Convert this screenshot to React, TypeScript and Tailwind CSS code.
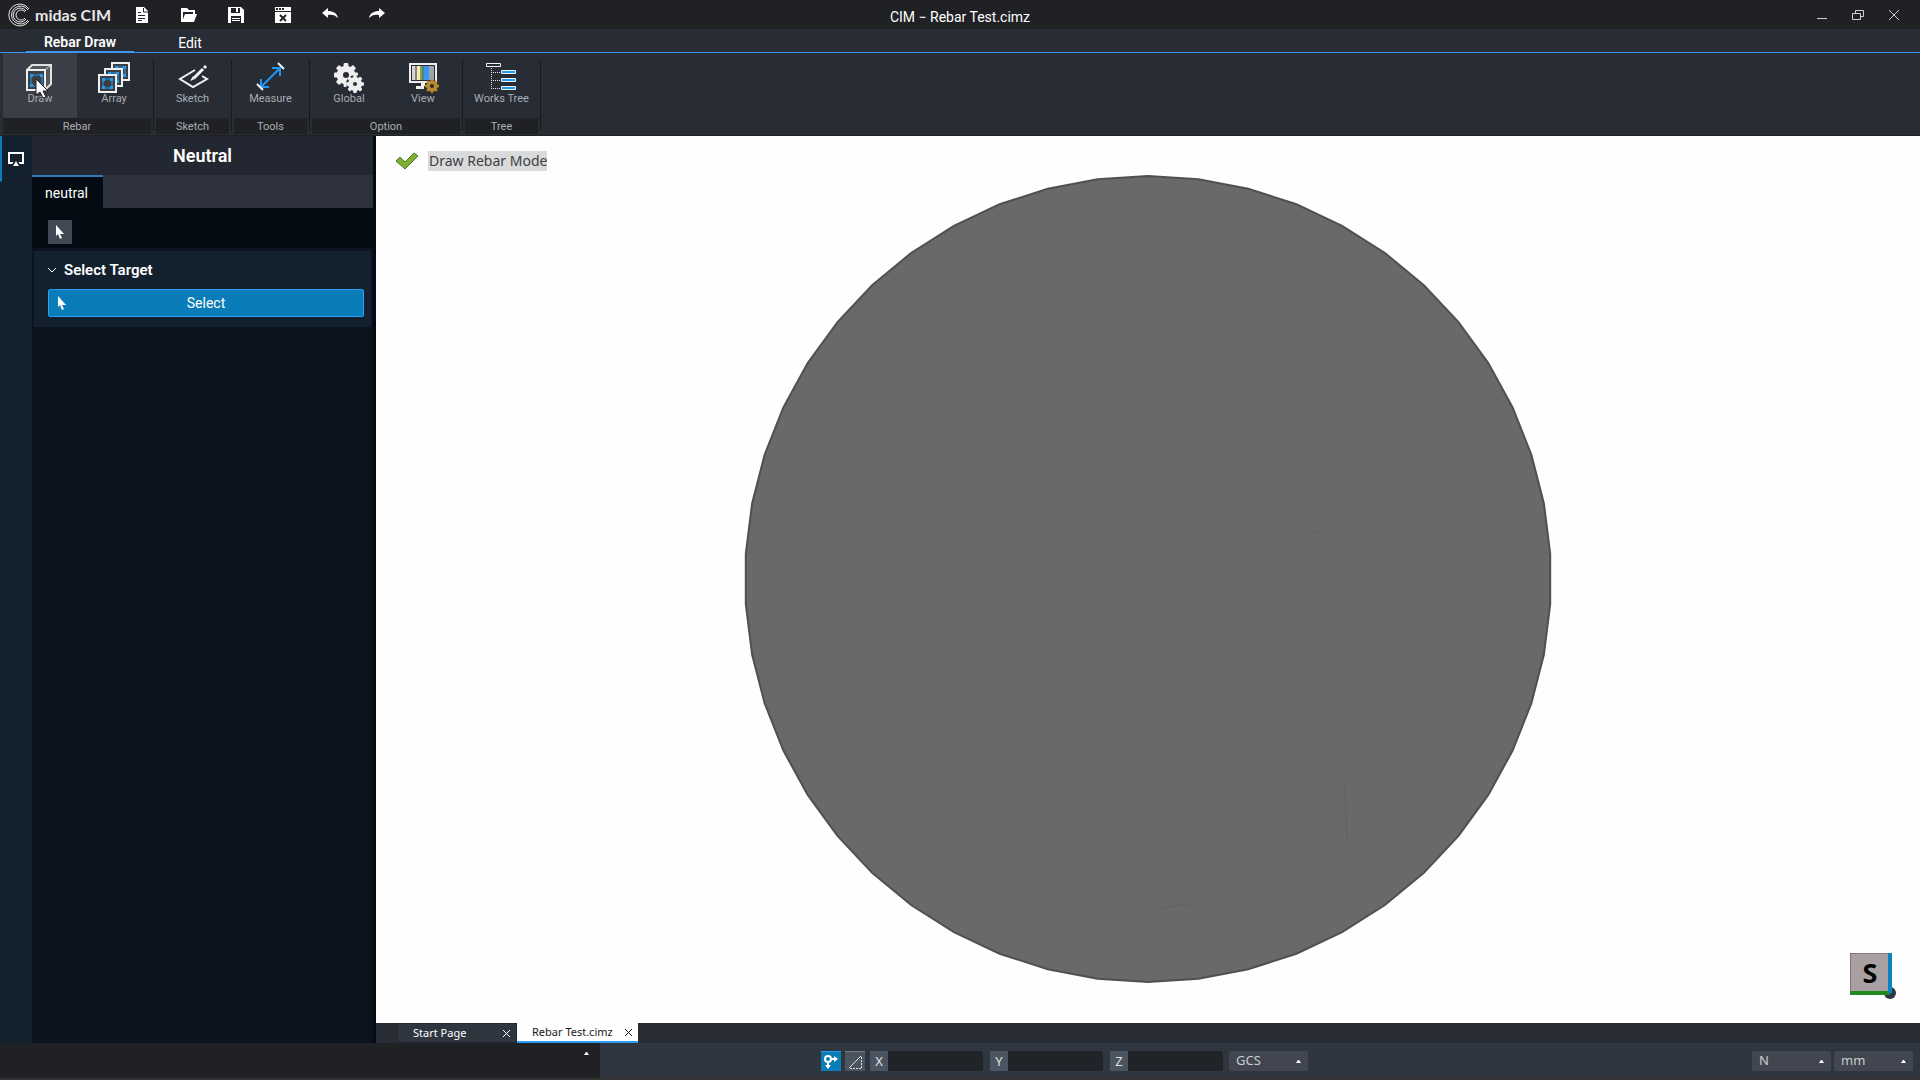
import type { ReactNode } from 'react'

const ribbonGroups = [
  { title: 'Rebar', items: [{ label: 'Draw', icon: <DrawIcon />, active: true }, { label: 'Array', icon: <ArrayIcon /> }] },
  { title: 'Sketch', items: [{ label: 'Sketch', icon: <SketchIcon /> }] },
  { title: 'Tools', items: [{ label: 'Measure', icon: <MeasureIcon /> }] },
  { title: 'Option', items: [{ label: 'Global', icon: <GlobalIcon /> }, { label: 'View', icon: <ViewIcon /> }] },
  { title: 'Tree', items: [{ label: 'Works Tree', icon: <TreeIcon /> }] },
] as { title: string; items: { label: string; icon: ReactNode; active?: boolean }[] }[]

const quickActions = [
  {
    label: 'New',
    icon: (
      <>
        <path d="M2 0h8l4 4v12H2z" fill="#fff" />
        <path d="M9.500 1v4H14M4 5.500h3M4 8.500h7M4 11.500h7M4 13.500h4" stroke="#222326" fill="none" />
      </>
    ),
  },
  {
    label: 'Open',
    icon: (
      <>
        <path d="M0 1h6l2 2h6v4h-2V5H2v10H0z" fill="#fff" />
        <path d="M4 7h12l-3 8H1z" fill="#fff" />
      </>
    ),
  },
  {
    label: 'Save',
    icon: (
      <>
        <path d="M0 0h13l3 3v13H0z" fill="#fff" />
        <path d="M3 1h9v5H3zM3 9h10v7H3z" fill="#222326" />
        <path d="M8 1h2v4H8zM4 11h8v1H4zM4 13h8v1H4z" fill="#fff" />
      </>
    ),
  },
  {
    label: 'Close file',
    icon: (
      <>
        <path d="M0 0h16v16H0z" fill="#fff" />
        <path d="M1 1h2v2H1zM4 1h2v2H4zM7 1h2v2H7zM0 4h16v1H0z" fill="#222326" />
        <path d="M5 8l6 6M11 8l-6 6" stroke="#222326" strokeWidth="2" />
      </>
    ),
  },
  {
    label: 'Undo',
    icon: <path d="M0 6l6-5v3c5 0 9 2 10 7-3-3-6-4-10-3v3z" fill="#fff" />,
  },
  {
    label: 'Redo',
    icon: <path d="M16 6l-6-5v3C5 4 1 6 0 11c3-3 6-4 10-3v3z" fill="#fff" />,
  },
]

function Square({ x, y }: { x: number; y: number }) {
  return (
    <g>
      <rect x={x + 1} y={y + 1} width="17" height="17" fill="#3b3e43" stroke="#efefef" strokeWidth="2" />
      <rect x={x + 5} y={y + 5} width="9" height="9" fill="none" stroke="#1f9cf0" />
      <path
        d={`M${x + 4} ${y + 4}h3v3h-3zM${x + 12} ${y + 4}h3v3h-3zM${x + 4} ${y + 12}h3v3h-3zM${x + 12} ${y + 12}h3v3h-3z`}
        fill="#1f9cf0"
      />
    </g>
  )
}

function DrawIcon() {
  return (
    <svg width="32" height="32" viewBox="1 0 32 32">
      <path d="M4 8l5-5h19v19l-6 6" fill="#55585c" stroke="#dfe3e0" strokeWidth="2" />
      <path d="M22 8l6-5" stroke="#dfe3e0" strokeWidth="1" />
      <rect x="4" y="8" width="18" height="20" fill="#3b3e43" stroke="#efefef" strokeWidth="2" />
      <rect x="8" y="13" width="11" height="11" fill="none" stroke="#1f9cf0" strokeWidth="1" />
      <path d="M7 12h3v3H7zM17 12h3v3h-3zM7 22h3v3H7zM17 22h3v3h-3z" fill="#1f9cf0" />
    </svg>
  )
}

function ArrayIcon() {
  return (
    <svg width="34" height="32" viewBox="0 0 34 32">
      <Square x={14} y={0} />
      <Square x={7} y={6} />
      <Square x={1} y={12} />
    </svg>
  )
}

function SketchIcon() {
  return (
    <svg width="32" height="32" viewBox="0 0 32 32" fill="none" stroke="#f2f2f2" strokeWidth="2">
      <path d="M18 8L3 17l13 8 14-8-5-3" />
      <path d="M17 16L26 7" strokeWidth="3" />
      <path d="M13 19l3-5 2 3z" fill="#f2f2f2" stroke="none" />
      <path d="M27 6l2-2" strokeWidth="3" />
    </svg>
  )
}

function MeasureIcon() {
  return (
    <svg width="32" height="32" viewBox="0 0 32 32" fill="none" strokeWidth="2">
      <path d="M6 25L25 6" stroke="#2196f3" />
      <path d="M17 6h8v8M6 17v8h8" stroke="#2196f3" />
      <path d="M23 1l6 6M2 22l6 6" stroke="#f2f2f2" />
    </svg>
  )
}

function Gear({ cx, cy, r, hole, fill }: { cx: number; cy: number; r: number; hole: number; fill: string }) {
  return (
    <g fill={fill}>
      {[0, 45, 90, 135].map((angle) => (
        <rect
          key={angle}
          x={cx - r / 5}
          y={cy - r}
          width={r / 2.5}
          height={r * 2}
          rx="1"
          transform={`rotate(${angle} ${cx} ${cy})`}
        />
      ))}
      <circle cx={cx} cy={cy} r={r * 0.78} />
      <circle cx={cx} cy={cy} r={hole} fill="#282c34" />
    </g>
  )
}

function GlobalIcon() {
  return (
    <svg width="32" height="32" viewBox="0 0 32 32">
      <Gear cx={13} cy={13} r={12} hole={3} fill="#efefef" />
      <circle cx="22" cy="22" r="9" fill="#282c34" />
      <Gear cx={22} cy={22} r={9} hole={2} fill="#efefef" />
    </svg>
  )
}

function ViewIcon() {
  return (
    <svg width="32" height="32" viewBox="0 0 32 32">
      <rect x="3" y="2" width="26" height="18" fill="#282c34" stroke="#efefef" strokeWidth="2" />
      <path d="M5 4h3v14H5z" fill="#d4d4d4" />
      <path d="M8 4h2v14H8z" fill="#8d7f83" />
      <path d="M10 4h3v14h-3z" fill="#f5eeb0" />
      <path d="M13 4h2v14h-2z" fill="#80a83c" />
      <path d="M15 4h2v14h-2z" fill="#5a7d8c" />
      <path d="M17 4h5v14h-5z" fill="#3b97f0" />
      <path d="M22 4h5v14h-5z" fill="#9ea4ac" />
      <path d="M14 21h4v3h-1v3H9v-3h5z" fill="#efefef" />
      <Gear cx={25} cy={24} r={7} hole={2} fill="#b98a2f" />
    </svg>
  )
}

function TreeIcon() {
  return (
    <svg width="32" height="32" viewBox="1 0 32 32" fill="none">
      <path d="M6.500 6v21M8 10.500h8M8 18.500h8M8 26.500h8" stroke="#e8e8e8" strokeDasharray="1 1" />
      <path d="M1.500 1.500h14v3h-14z" stroke="#f2f2f2" />
      <path d="M16.500 8.500h14v3h-14zM16.500 16.500h14v3h-14zM16.500 24.500h14v3h-14z" fill="#1f9cf0" stroke="#f2f2f2" />
    </svg>
  )
}

function PointerIcon() {
  return (
    <svg width="10" height="14" viewBox="0 0 10 14">
      <path d="M1 0v11l2-2 2 5 2-1-2-4h4z" fill="#fff" />
    </svg>
  )
}

function CloseIcon() {
  return (
    <svg width="7" height="7" viewBox="0 0 7 7" stroke="currentColor" strokeWidth="1">
      <path d="M0 0l7 7M7 0L0 7" />
    </svg>
  )
}

function UpSelect({ label, value, className }: { label: string; value: string; className: string }) {
  return (
    <div className={`grid h-5 items-center rounded-xs bg-[#424650] text-[#c9cdd2] ${className}`}>
      <select
        aria-label={label}
        defaultValue={value}
        className="col-start-1 row-start-1 h-5 w-full appearance-none bg-transparent px-[7px] text-[13px]"
      >
        <option>{value}</option>
      </select>
      <svg width="5" height="3" viewBox="0 0 5 3" className="pointer-events-none col-start-1 row-start-1 mr-[7px] justify-self-end">
        <path d="M2 0h1l2 3H0z" fill="#fff" />
      </svg>
    </div>
  )
}

function TitleBar() {
  return (
    <header className="grid h-[29px] grid-cols-[1fr_auto_1fr] items-center bg-[#202125] text-white">
      <div className="flex items-center">
        <div className="flex w-[128px] items-center gap-1 pl-[7px] whitespace-nowrap">
          <svg width="24" height="24" viewBox="0 0 24 24" fill="none" stroke="#e6e6e6">
            <path d="M22 6A11 11 0 1 0 22 18" />
            <path d="M21 7A9 9 0 1 0 21 17" />
            <path d="M19 8A7 7 0 1 0 19 16" />
            <path d="M18 9A5 5 0 1 0 18 15" />
          </svg>
          <span className="font-[Lato] text-base leading-5 font-bold text-[#e6e6e6]">midas CIM</span>
        </div>
        <div className="flex gap-[31px] pl-1.5">
          {quickActions.map((action) => (
            <button key={action.label} aria-label={action.label}>
              <svg width="16" height="16" viewBox="0 0 16 16">
                {action.icon}
              </svg>
            </button>
          ))}
        </div>
      </div>
      <h1 className="pt-1 text-sm">CIM − Rebar Test.cimz</h1>
      <div className="flex justify-end gap-6 pr-5 text-[#d0d0c8]">
        <button aria-label="Minimize">
          <svg width="12" height="12" viewBox="0 0 12 12" stroke="currentColor">
            <path d="M1 9.500h10" />
          </svg>
        </button>
        <button aria-label="Restore">
          <svg width="12" height="12" viewBox="0 0 12 12" fill="none" stroke="currentColor">
            <path d="M.5 4.500h8v6h-8zM3.500 4V1.500h8v6H9" />
          </svg>
        </button>
        <button aria-label="Close">
          <svg width="12" height="12" viewBox="0 0 12 12" stroke="currentColor">
            <path d="M1 1l10 10M11 1L1 11" />
          </svg>
        </button>
      </div>
    </header>
  )
}

function Ribbon() {
  return (
    <>
      <nav className="flex h-6 items-stretch border-b border-[#3b97f0] bg-[#282c34] pl-[26px] text-sm leading-4 text-white">
        <button className="w-[108px] border-b border-[#3b97f0] pt-1 font-semibold">Rebar Draw</button>
        <button className="w-[112px] pt-1">Edit</button>
      </nav>
      <div className="flex h-[83px] border-b border-[#202125] bg-[#282c34] pl-[3px] text-[11px] text-[#a9adb5]">
        {ribbonGroups.map((group) => (
          <section key={group.title} className="flex" aria-label={group.title}>
            <div className="flex flex-col">
              <div className="flex h-[65px]">
                {group.items.map((item) => (
                  <button
                    key={item.label}
                    className={`flex flex-col items-center pt-[9px] leading-[10px] whitespace-nowrap ${
                      group.items.length > 1 ? 'w-[74px]' : 'w-[73px]'
                    } ${item.active ? 'bg-[#3a3e46]' : ''}`}
                  >
                    {item.icon}
                    {item.label}
                  </button>
                ))}
              </div>
              <div className="h-4 bg-[#202125] text-center leading-[18px]">{group.title}</div>
            </div>
            <div className="mx-0.5 mt-[7px] mb-1 w-px bg-[#17191d]" />
          </section>
        ))}
      </div>
    </>
  )
}

function SidePanel() {
  return (
    <aside className="flex w-[376px] shrink-0 border-r-3 border-[#050b12] bg-[#0c131e] text-white">
      <div className="w-8 bg-[#13202d]">
        <button
          aria-label="Display"
          className="flex h-[46px] w-8 items-center border-b border-l-2 border-b-[#1d2227] border-l-[#0a7db8] pl-1.5"
        >
          <svg width="16" height="15" viewBox="0 0 16 15">
            <path d="M1 2h14v10H1z" fill="none" stroke="#fff" strokeWidth="2" />
            <path d="M8 7l5 8H3z" fill="#13202d" />
            <path d="M8 10l3 5H5z" fill="#fff" />
          </svg>
        </button>
      </div>
      <div className="min-w-0 flex-1">
        <h2 className="h-[39px] bg-[#232731] text-center text-lg leading-10 font-semibold">Neutral</h2>
        <div className="flex h-[33px] bg-[#2d323e]">
          <button className="w-[71px] border-t-2 border-[#2f7cb8] bg-[#050b12] pr-0.5 text-sm">neutral</button>
        </div>
        <div className="flex h-10 items-end bg-[#050b12] px-4 pb-1">
          <button aria-label="Pointer" className="flex size-6 items-center justify-center bg-[#3f4a55]">
            <PointerIcon />
          </button>
        </div>
        <section className="mx-0.5 mt-[3px] bg-[#13202d] pt-2 pr-[7px] pb-2.5 pl-3.5">
          <h3 className="flex h-[22px] items-center gap-2 text-[15px] font-semibold">
            <svg width="8" height="5" viewBox="0 0 8 5" fill="none" stroke="#fff">
              <path d="M0 0l4 4 4-4" />
            </svg>
            Select Target
          </h3>
          <button className="mt-2 grid h-7 w-full grid-cols-[40px_1fr_40px] items-center rounded-xs border border-[#2a9df4] bg-[#0a7db8] text-sm">
            <span className="pl-2">
              <PointerIcon />
            </span>
            Select
          </button>
        </section>
      </div>
    </aside>
  )
}

// The section outline is tessellated into 50 segments
const outline = Array.from({ length: 50 }, (_, i) => {
  const a = (i * Math.PI) / 25
  return `${(404 + 403 * Math.sin(a)).toFixed(1)},${(404 - 403 * Math.cos(a)).toFixed(1)}`
}).join(' ')

function Viewport() {
  return (
    <div className="flex min-w-0 flex-1 flex-col">
      <div className="relative flex flex-1 items-start justify-center bg-[#fefefe] pt-[39px]">
        <svg width="808" height="808" viewBox="0 0 808 808">
          <polygon points={outline} fill="#696969" stroke="#505050" strokeWidth="2" />
          <path
            d="M408 729l5 4 13-1 13-3 10 3 6 8M412 735l13 15M601 610l2 55M482 214l1 8M570 356l8 3"
            fill="none"
            stroke="#626262"
          />
        </svg>
        <div className="absolute top-[15px] left-[19px] flex items-center gap-[9px]">
          <svg width="24" height="18" viewBox="0 0 24 18">
            <path d="M1 9l4-4 5 5L19 1l4 3-13 13z" fill="#84ad35" stroke="#3f7d2c" />
          </svg>
          <span className="h-5 bg-[#d9dadb] pl-px font-['Noto_Sans'] text-sm leading-5 text-[#404040]">Draw Rebar Mode</span>
        </div>
        <svg width="46" height="46" viewBox="0 0 46 46" className="absolute right-6 bottom-6">
          <circle cx="40" cy="40" r="6" fill="#2f3846" />
          <rect x="0" y="0" width="40" height="40" fill="#a8a0a3" stroke="#555" strokeWidth="1" />
          <path d="M0 38h40v4H0z" fill="#1f8a1f" />
          <path d="M38 0h4v40h-4z" fill="#0a85c2" />
          <text x="20" y="30" textAnchor="middle" fontFamily="Noto Sans, sans-serif" fontWeight="700" fontSize="27">
            S
          </text>
        </svg>
      </div>
      <div className="flex h-5 bg-[#282c34] pl-[21px] font-['Noto_Sans'] text-[11px]">
        <div className="flex w-[120px] items-center justify-between border border-[#23262c] bg-[#303640] pr-1.5 pl-[15px] text-white">
          <button>Start Page</button>
          <button aria-label="Close Start Page">
            <CloseIcon />
          </button>
        </div>
        <div className="flex w-[121px] items-center justify-between border-b-2 border-[#2a9df4] bg-[#fefefe] pt-px pr-1.5 pl-[15px] text-[#1a1a1a]">
          <button>Rebar Test.cimz</button>
          <button aria-label="Close Rebar Test.cimz">
            <CloseIcon />
          </button>
        </div>
      </div>
    </div>
  )
}

function StatusBar() {
  return (
    <footer className="flex h-[37px] border-b-2 border-[#333] bg-[#303640] font-['Noto_Sans']">
      <div className="flex w-[600px] items-start justify-end bg-[#202125] pt-1 pr-[11px]">
        <button aria-label="Expand log" className="flex h-3 items-center">
          <svg width="5" height="3" viewBox="0 0 5 3">
            <path d="M2 0h1l2 3H0z" fill="#fff" />
          </svg>
        </button>
      </div>
      <div className="flex flex-1 items-center pt-px pr-[7px] pl-[221px]">
        <button aria-label="Snap" className="flex size-5 items-center justify-center border-t border-[#2a9df4] bg-[#0a7db8]">
          <svg width="16" height="16" viewBox="0 0 16 16" fill="none" stroke="#fff" strokeWidth="2">
            <circle cx="5" cy="5" r="3" />
            <path d="M8 5h4M5 8v4" />
            <path d="M11 2l4 3-4 3zM2 11h6l-3 4z" fill="#fff" stroke="none" />
          </svg>
        </button>
        <button aria-label="Angle" className="ml-1 flex size-5 items-center justify-center border-t border-[#7b7b7b] bg-[#4b5561]">
          <svg width="14" height="14" viewBox="0 0 14 14" fill="none" stroke="#e0e0e0">
            <path d="M1 13L13 1" />
            <path d="M13.500 2v12M2 13.500h12" strokeDasharray="2 1" />
          </svg>
        </button>
        <div className="ml-[5px] flex gap-[7px]">
          {['X', 'Y', 'Z'].map((axis) => (
            <label key={axis} className="flex h-5 items-center text-[13px] text-[#e0e0e0]">
              <span className="w-[18px] bg-[#4b5561] text-center leading-5">{axis}</span>
              <input className="h-5 w-[95px] rounded-r-xs bg-[#202428] px-1 outline-none" />
            </label>
          ))}
        </div>
        <UpSelect label="Coordinate system" value="GCS" className="ml-1.5 w-[79px]" />
        <div className="ml-auto flex gap-[3px]">
          <UpSelect label="Force unit" value="N" className="w-[79px]" />
          <UpSelect label="Length unit" value="mm" className="w-[79px]" />
        </div>
      </div>
    </footer>
  )
}

export default function App() {
  return (
    <div className="relative flex min-h-screen flex-col bg-[#282c34] font-[Roboto,sans-serif]">
      <TitleBar />
      <Ribbon />
      <main className="flex flex-1">
        <SidePanel />
        <Viewport />
      </main>
      <StatusBar />

      {/* Mouse cursor */}
      <svg width="14" height="20" viewBox="0 0 14 20" className="pointer-events-none absolute top-[79px] left-[35px]">
        <path d="M1 0v16l4-3 3 6 3-1-3-6h5z" fill="#fff" stroke="#222" strokeWidth="1" />
      </svg>
    </div>
  )
}
